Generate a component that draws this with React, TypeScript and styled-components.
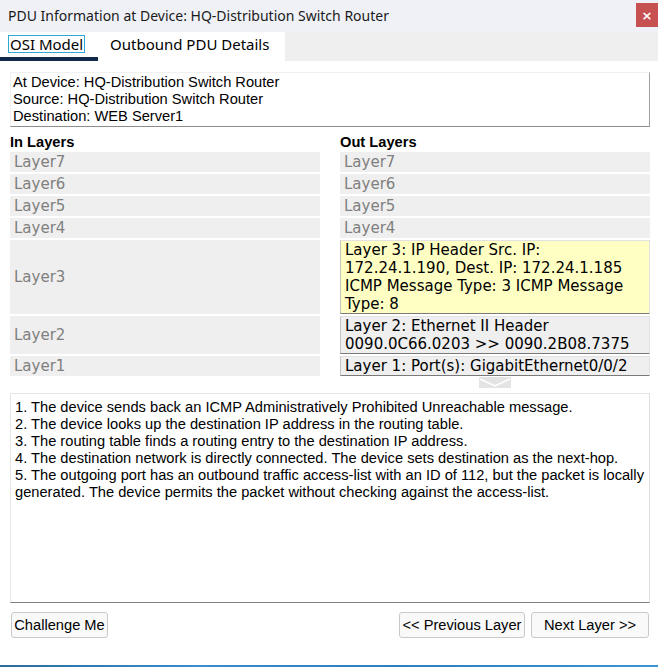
import { Fragment } from "react";
import { createGlobalStyle, styled } from "styled-components";

const GlobalStyle = createGlobalStyle`
  html, body {
    margin: 0;
    padding: 0;
    background: #ffffff;
  }
  * {
    box-sizing: border-box;
  }
`;

const ARIAL = `"Liberation Sans", Arial, sans-serif`;
const VERDANA = `"DejaVu Sans", Verdana, sans-serif`;
const SEGOE = `"Segoe UI", "Noto Sans", sans-serif`;

const StyledWindow = styled.div`
  display: flex;
  flex-direction: column;
  width: 658px;
  height: 667px;
  background: #ffffff;
  overflow: hidden;
`;

const StyledTitleBar = styled.div`
  display: flex;
  align-items: center;
  justify-content: space-between;
  height: 32px;
  padding: 0 0 0 8px;
  background: #eff1f7;
`;

const StyledTitle = styled.span`
  font-family: ${SEGOE};
  font-size: 14px;
  color: #1a1a1a;
  margin-top: -2px;
`;

const StyledClose = styled.button`
  display: flex;
  align-items: center;
  justify-content: center;
  width: 22px;
  height: 24px;
  margin-top: -2px;
  border: none;
  padding: 0;
  background: #c75050;
  color: #ffffff;
  font-family: ${VERDANA};
  font-size: 13px;
  font-weight: 700;
`;

const StyledTabStrip = styled.div`
  display: flex;
  height: 29px;
  background: #efefef;
`;

const StyledTab = styled.div<{ $active?: boolean; $width: number }>`
  display: flex;
  align-items: center;
  width: ${({ $width }) => $width}px;
  padding: 0 0 2px ${({ $active }) => ($active ? 9 : 11)}px;
  background: #ffffff;
  font-family: ${SEGOE};
  font-size: 15px;
  color: #000000;
  border-bottom: 4px solid ${({ $active }) => ($active ? "#10284a" : "#ffffff")};
  white-space: nowrap;
`;

const StyledTabLabel = styled.span<{ $focused?: boolean }>`
  line-height: 16px;
  padding: 0 1px;
  outline: ${({ $focused }) => ($focused ? "1px solid #2fa6d6" : "none")};
`;

const StyledContent = styled.div`
  display: flex;
  flex-direction: column;
  flex: 1;
  padding: 11px 8px 0 10px;
`;

const StyledInfoBox = styled.div`
  padding: 1px 2px;
  border: 1px solid;
  border-color: #f0f0f0 #a0a0a0 #8c8c8c #f0f0f0;
  font-family: ${ARIAL};
  font-size: 14.67px;
  line-height: 17px;
  color: #000000;
`;

const StyledLayerGrid = styled.div`
  display: grid;
  grid-template-columns: 310px 310px;
  column-gap: 20px;
  row-gap: 2px;
  margin-top: 8px;
`;

const StyledColumnHeader = styled.div`
  font-family: ${ARIAL};
  font-size: 14.67px;
  font-weight: 700;
  line-height: 15px;
  color: #000000;
`;

type CellKind = "empty" | "detail" | "active";

const cellBackground: Record<CellKind, string> = {
  empty: "#efefef",
  detail: "#efefef",
  active: "#ffffc4",
};

const StyledLayerCell = styled.div<{ $kind: CellKind }>`
  display: flex;
  align-items: center;
  padding: ${({ $kind }) => ($kind === "empty" ? "1px 4px" : "0 4px")};
  background: ${({ $kind }) => cellBackground[$kind]};
  font-family: ${VERDANA};
  font-size: 15px;
  line-height: 18px;
  white-space: nowrap;
  color: ${({ $kind }) => ($kind === "empty" ? "#7f7f7f" : "#000000")};
  border: ${({ $kind }) => ($kind === "empty" ? "none" : "1px solid")};
  border-color: #e2e2e2 #e2e2e2 #7a7a7a #c4c4c4;
`;

const StyledChevronRow = styled.div`
  display: grid;
  grid-template-columns: 310px 310px;
  column-gap: 20px;
  height: 11px;
  margin-top: 1px;
`;

const StyledChevron = styled.svg`
  grid-column: 2;
  justify-self: center;
  display: block;
`;

const StyledDescription = styled.div`
  height: 210px;
  margin-top: 5px;
  padding: 5px 4px;
  border: 1px solid;
  border-color: #e6e6e6 #e0e0e0 #808080 #e6e6e6;
  font-family: ${ARIAL};
  font-size: 14.67px;
  line-height: 17px;
  color: #000000;
`;

const StyledButtonRow = styled.div`
  display: flex;
  justify-content: space-between;
  align-items: center;
  margin-top: 9px;
  padding: 0 1px;
`;

const StyledButtonGroup = styled.div`
  display: flex;
  gap: 6px;
`;

const StyledButton = styled.button<{ $width: number }>`
  width: ${({ $width }) => $width}px;
  height: 26px;
  padding: 0;
  background: #f9f9f9;
  border: 1px solid #c9c9c9;
  border-radius: 3px;
  font-family: ${ARIAL};
  font-size: 14.67px;
  color: #000000;
  white-space: nowrap;
`;

const StyledTaskbar = styled.div`
  height: 2px;
  background: linear-gradient(90deg, #2b6c9c 0%, #3a8ccc 30%, #2a7fbf 60%, #3b93cf 100%);
`;

const outLayers: { kind: CellKind; text: string[] }[] = [
  { kind: "empty", text: ["Layer7"] },
  { kind: "empty", text: ["Layer6"] },
  { kind: "empty", text: ["Layer5"] },
  { kind: "empty", text: ["Layer4"] },
  {
    kind: "active",
    text: [
      "Layer 3: IP Header Src. IP:",
      "172.24.1.190, Dest. IP: 172.24.1.185",
      "ICMP Message Type: 3 ICMP Message",
      "Type: 8",
    ],
  },
  {
    kind: "detail",
    text: ["Layer 2: Ethernet II Header", "0090.0C66.0203 >> 0090.2B08.7375"],
  },
  { kind: "detail", text: ["Layer 1: Port(s): GigabitEthernet0/0/2"] },
];

const inLayers = ["Layer7", "Layer6", "Layer5", "Layer4", "Layer3", "Layer2", "Layer1"];

const steps = [
  "1. The device sends back an ICMP Administratively Prohibited Unreachable message.",
  "2. The device looks up the destination IP address in the routing table.",
  "3. The routing table finds a routing entry to the destination IP address.",
  "4. The destination network is directly connected. The device sets destination as the next-hop.",
  "5. The outgoing port has an outbound traffic access-list with an ID of 112, but the packet is locally generated. The device permits the packet without checking against the access-list.",
];

const App = (): JSX.Element => {
  return (
    <>
      <GlobalStyle />
      <StyledWindow>
        <StyledTitleBar>
          <StyledTitle>PDU Information at Device: HQ-Distribution Switch Router</StyledTitle>
          <StyledClose>×</StyledClose>
        </StyledTitleBar>

        <StyledTabStrip>
          <StyledTab $active $width={98}>
            <StyledTabLabel $focused>OSI Model</StyledTabLabel>
          </StyledTab>
          <StyledTab $width={187}>
            <StyledTabLabel>Outbound PDU Details</StyledTabLabel>
          </StyledTab>
        </StyledTabStrip>

        <StyledContent>
          <StyledInfoBox>
            <div>At Device: HQ-Distribution Switch Router</div>
            <div>Source: HQ-Distribution Switch Router</div>
            <div>Destination: WEB Server1</div>
          </StyledInfoBox>

          <StyledLayerGrid>
            <StyledColumnHeader>In Layers</StyledColumnHeader>
            <StyledColumnHeader>Out Layers</StyledColumnHeader>
            {inLayers.map((name, i) => (
              <Fragment key={name}>
                <StyledLayerCell $kind="empty">{name}</StyledLayerCell>
                <StyledLayerCell $kind={outLayers[i].kind}>
                  <div>
                    {outLayers[i].text.map((line) => (
                      <div key={line}>{line}</div>
                    ))}
                  </div>
                </StyledLayerCell>
              </Fragment>
            ))}
          </StyledLayerGrid>

          <StyledChevronRow>
            <StyledChevron width="32" height="11" viewBox="0 0 32 11">
              <rect x="0" y="0" width="32" height="11" fill="#e4e4e4" />
              <polyline points="1,2 16,9 31,2" fill="none" stroke="#ffffff" strokeWidth="1.5" />
            </StyledChevron>
          </StyledChevronRow>

          <StyledDescription>
            {steps.map((step) => (
              <div key={step}>{step}</div>
            ))}
          </StyledDescription>

          <StyledButtonRow>
            <StyledButton $width={97}>Challenge Me</StyledButton>
            <StyledButtonGroup>
              <StyledButton $width={126}>&lt;&lt; Previous Layer</StyledButton>
              <StyledButton $width={118}>Next Layer &gt;&gt;</StyledButton>
            </StyledButtonGroup>
          </StyledButtonRow>
        </StyledContent>

        <StyledTaskbar />
      </StyledWindow>
    </>
  );
};

export default App;
